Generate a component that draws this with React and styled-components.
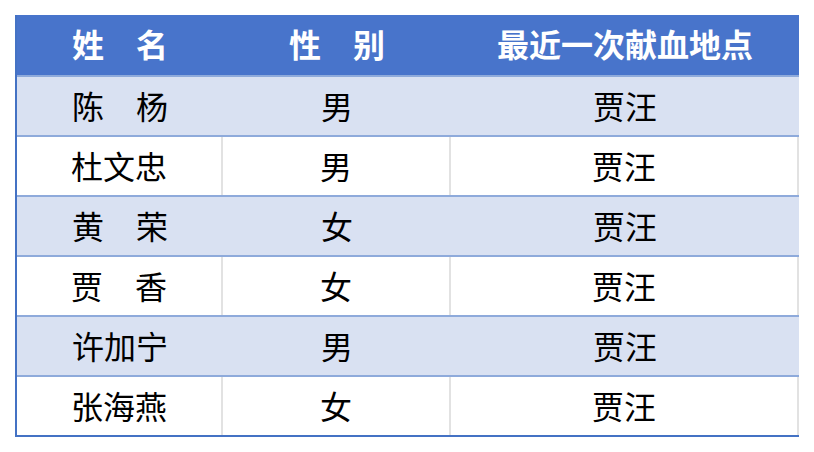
import React from 'react'
import styled, { createGlobalStyle } from 'styled-components'

const GlobalStyle = createGlobalStyle`
  html, body {
    margin: 0;
    padding: 0;
    background: #ffffff;
  }
  body {
    font-family: "Noto Sans CJK SC", "Microsoft YaHei", sans-serif;
  }
`

const Page = styled.div`
  padding: 15px 0 0 15px;
`

const Sheet = styled.div`
  width: 784px;
  border-left: 2px solid #4472c4;
  border-bottom: 2px solid #4472c4;
  box-sizing: border-box;
`

const Row = styled.div`
  display: grid;
  grid-template-columns: 206px 228px 348px;
  height: ${(p) => (p.$header ? '60px' : '58px')};
  border-top: ${(p) => (p.$header ? 'none' : '2px solid #8eaadb')};
  background: ${(p) => (p.$header ? '#4874cb' : p.$shade ? '#d9e1f2' : '#ffffff')};
`

const Cell = styled.div`
  display: flex;
  align-items: center;
  justify-content: center;
  box-sizing: border-box;
  font-size: 32px;
  line-height: 1;
  font-weight: ${(p) => (p.$header ? 700 : 400)};
  color: ${(p) => (p.$header ? '#ffffff' : '#000000')};
  border-right: ${(p) => (p.$grid ? '2px solid #e2e2e2' : 'none')};
  padding-bottom: ${(p) => (p.$header ? '4px' : '3px')};
`

const people = [
  ['陈　杨', '男', '贾汪'],
  ['杜文忠', '男', '贾汪'],
  ['黄　荣', '女', '贾汪'],
  ['贾　香', '女', '贾汪'],
  ['许加宁', '男', '贾汪'],
  ['张海燕', '女', '贾汪'],
]

export default function App() {
  return (
    <Page>
      <GlobalStyle />
      <Sheet>
        <Row $header>
          <Cell $header>姓　名</Cell>
          <Cell $header>性　别</Cell>
          <Cell $header>最近一次献血地点</Cell>
        </Row>
        {people.map((p, i) => {
          const shade = i % 2 === 0
          return (
            <Row key={i} $shade={shade}>
              {p.map((v, j) => (
                <Cell key={j} $grid={!shade}>
                  {v}
                </Cell>
              ))}
            </Row>
          )
        })}
      </Sheet>
    </Page>
  )
}
